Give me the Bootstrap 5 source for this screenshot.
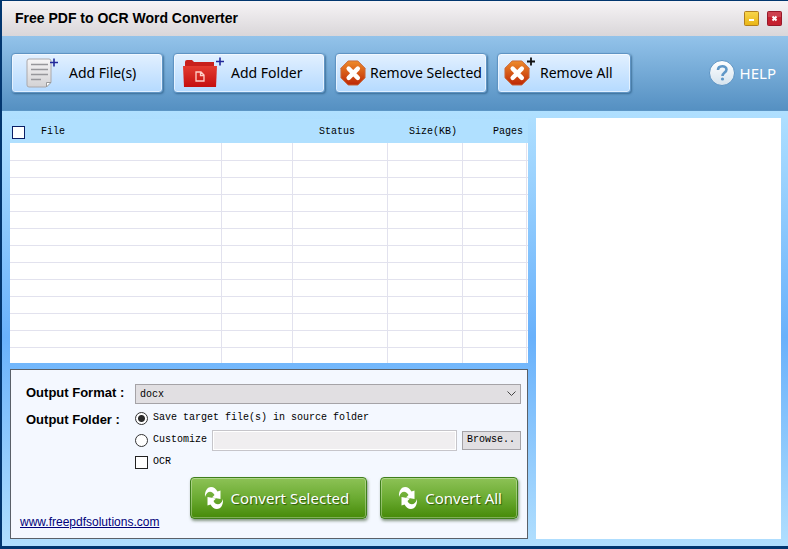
<!DOCTYPE html>
<html lang="en">
<head>
<meta charset="utf-8">
<meta name="viewport" content="width=device-width, initial-scale=1">
<title>Free PDF to OCR Word Converter</title>
<link href="https://cdn.jsdelivr.net/npm/bootstrap@5.3.0/dist/css/bootstrap.min.css" rel="stylesheet">
<style>
  body { font-family: "Liberation Sans", sans-serif; color: #000; background: #b0e0ff; }
  .app-window { border: solid #02366f; border-width: 1px 0 3px 2px; }
  .title-bar { height: 35px; padding: 0 6px 0 13px; background: linear-gradient(#f7f4f6, #d9d6d9); }
  .title-bar h1 { font-size: 14px; font-weight: bold; }
  .win-btn { width: 15px; height: 15px; padding: 0; border: 0; background: none; line-height: 0; }
  .tool-bar { height: 75px; padding: 0 12px 0 9px; gap: 10px; background: linear-gradient(#93c3ea, #5590c2); border-bottom: 1px solid #5c96c6; }
  .tool-btn, .help-link, .convert-btn { font-family: "Noto Sans", sans-serif; font-size: 15px; line-height: 20px; white-space: nowrap; }
  .tool-btn { width: 152px; height: 40px; padding: 0; font-size: 14px; color: #000; border: 1px solid #5f94c4; border-radius: 4px; background: linear-gradient(#e2f0ff, #b5daff); box-shadow: inset 0 0 0 1px #ffffff90, 1px 1px 2px #29587fb0; }
  .tool-btn.compact { width: 134px; }
  .help-link { color: #fff; gap: 5px; }
  .work-area { padding: 7px 7px 7px 8px; gap: 8px; background: linear-gradient(#b0e0ff, #69b1fb 52%, #b1dffe); }
  .files-side { flex: 518 1 0; min-width: 0; }
  .preview { flex: 245 1 0; background: #fff; }
  .mono-text, .file-table { font-family: "Liberation Mono", monospace; font-size: 10px; line-height: 12px; }
  .file-table { table-layout: fixed; width: 100%; margin-top: 1px; }
  .file-table th { height: 24px; padding: 2px 5px 0; font-weight: normal; }
  .file-table th:first-child { padding-left: 2px; }
  .file-table thead { background: #b0e0ff; }
  .file-table tbody { background: #fff; }
  .file-table td { height: 17px; padding: 0; border-right: 1px solid #e2e2ee; border-bottom: 1px solid #e2e2ee; }
  .file-table td:last-child { border-right: 0; box-shadow: inset -1px 0 #fff, inset -2px 0 #e2e2ee; }
  .file-table tr:last-child td { height: 16px; border-bottom: 0; }
  .col-path { width: 70px; } .col-status { width: 95px; } .col-size { width: 75px; } .col-pages { width: 66px; }
  .tick { appearance: none; flex: none; width: 13px; height: 13px; margin: 0; border: 1px solid #222; background: #fff; }
  .tick[type=radio] { border-radius: 50%; border-color: #333; }
  .tick[type=radio]:checked { background: radial-gradient(circle, #2b2b2b 3px, #fff 4px); }
  .tick:checked[type=checkbox] { background: #234; box-shadow: inset 0 0 0 2px #fff; }
  .file-table .tick { border-color: #0b1f66; }
  .output-panel { margin-top: 6px; padding: 14px 6px 9px 9px; border: 1px solid #5a6068; background: #f4f8ff; }
  .options { display: grid; grid-template-columns: 109px 1fr; row-gap: 3px; padding-left: 6px; }
  .options .caption { font-size: 13px; font-weight: bold; line-height: 18px; }
  .format-box { appearance: none; width: 100%; height: 20px; padding: 1px 4px 0; border: 1px solid #a5a3a7; border-radius: 0; color: #000;
    background: #e1dfe2 url("data:image/svg+xml,%3Csvg xmlns='http://www.w3.org/2000/svg' viewBox='0 0 9 6'%3E%3Cpath d='M.5.5l4 4 4-4' fill='none' stroke='%23444'/%3E%3C/svg%3E") no-repeat right 4px center / 9px 6px; }
  .opt-line { gap: 5px; height: 22px; }
  .path-box { height: 21px; min-width: 0; border: 1px solid #c6c5ca; background: #f0eef0; box-shadow: inset 0 0 0 1px #fff; }
  .browse-btn { width: 59px; height: 19px; padding: 0 4px; border: 1px solid #a5a3a7; background: #e1dfe2; color: #000; text-align: left; }
  .site-link { font-size: 12px; line-height: 14px; color: #00007a; }
  .actions { gap: 13px; padding-right: 3px; }
  .convert-btn { height: 42px; margin-bottom: 10px; padding: 0 17px 0 13px; gap: 7px; color: #fff; border: 1px solid #3f7f1c; border-radius: 4px; background: linear-gradient(#8dc256, #6bab32 50%, #468a08); box-shadow: inset 0 0 0 1px #ffffff50, 1px 2px 3px #33502890; text-shadow: 1px 1px 1px #2c5a0a; }
  .convert-btn.wide-lead { padding: 0 15px 0 17px; }
  svg { display: block; flex: none; overflow: visible; }
</style>
<script src="https://cdn.jsdelivr.net/npm/bootstrap@5.3.0/dist/js/bootstrap.bundle.min.js"></script>
</head>
<body>
<svg width="0" height="0" class="position-absolute" aria-hidden="true">
  <defs>
    <linearGradient id="paper" x2="0" y2="1"><stop stop-color="#f6f5f6"/><stop offset="1" stop-color="#d3d2d4"/></linearGradient>
    <linearGradient id="red" x2="0" y2="1"><stop stop-color="#e33b30"/><stop offset="1" stop-color="#c50f0e"/></linearGradient>
    <linearGradient id="orange" x2="0" y2="1"><stop stop-color="#ee8b2b"/><stop offset="1" stop-color="#bd2605"/></linearGradient>
    <linearGradient id="yellow" x2="0" y2="1"><stop stop-color="#f8d64c"/><stop offset="1" stop-color="#e9b414"/></linearGradient>
    <linearGradient id="disc" x2="0" y2="1"><stop stop-color="#fff"/><stop offset="1" stop-color="#d5e3ee"/></linearGradient>
    <symbol id="remove" viewBox="0 0 27 27"><path d="M8.5 1h10L26 8.5v10L18.500 26h-10L1 18.500v-10z" fill="url(#orange)" stroke="#c7683c"/><path d="M9 9l9.500 9.500M18.500 9L9 18.500" stroke="#fff" stroke-width="4.600" stroke-linecap="round"/></symbol>
    <symbol id="cycle" viewBox="0 0 18 22"><g fill="#fff"><path id="cycle-arm" d="M0 10C-.5 3 3 0 6 0C9 0 11 2 12.500 4.500L15.500 3.500V12L7 10.500L9.500 8C7.500 3.500 2 3 0 10z"/><path d="M0 10C-.5 3 3 0 6 0C9 0 11 2 12.500 4.500L15.500 3.500V12L7 10.500L9.500 8C7.500 3.500 2 3 0 10z" transform="rotate(180 9 11)"/></g></symbol>
  </defs>
</svg>
<main class="app-window d-flex flex-column min-vh-100">
  <header class="title-bar d-flex align-items-center">
    <h1 class="m-0 me-auto">Free PDF to OCR Word Converter</h1>
    <div class="d-flex gap-2">
      <button class="win-btn" type="button" aria-label="Minimize"><svg width="15" height="15"><rect x=".5" y=".5" width="14" height="14" rx="1" fill="url(#yellow)" stroke="#b17e1e"/><path d="M5 9h5" stroke="#fff" stroke-width="2"/></svg></button>
      <button class="win-btn" type="button" aria-label="Close"><svg width="15" height="15"><rect x=".5" y=".5" width="14" height="14" rx="1" fill="#c5202f" stroke="#96192a"/><path d="M1 1h13v5H1z" fill="#fff" opacity=".15"/><path d="M5.500 5.500l4 4M9.500 5.500l-4 4" stroke="#fff" stroke-width="2"/></svg></button>
    </div>
  </header>
  <nav class="tool-bar d-flex align-items-center" aria-label="Files">
    <button class="tool-btn d-flex align-items-center" type="button">
      <svg class="ms-3 me-1" width="37" height="36"><path d="M0 5q0-2 2-2h20q2 0 2 2v21l-5 5H2q-2 0-2-2z" transform="translate(-1 1)" fill="url(#paper)" stroke="#aaa8ab"/><path d="M18.500 32v-4.500h4.500z" fill="#fff" stroke="#999"/><path d="M3 9.500h17M3 14.500h17M3 19.500h17M3 24.500h10" stroke="#97979b" stroke-width="1.500"/><path d="M22 7.500h8M26 3.500v8" stroke="#22289a" stroke-width="1.600"/></svg>Add File(s)</button>
    <button class="tool-btn d-flex align-items-center" type="button">
      <svg class="ms-2 me-2" width="41" height="36"><path d="M3 12V7q0-2 2-2h5l2 2h20v5z" fill="#c8201c"/><path d="M1 11h34l-1 21H2z" fill="url(#red)"/><path d="M14 17h5l3 3v6h-8zM18.500 17.500v3H22" fill="none" stroke="#ffd0c8" stroke-width="1.300"/><path d="M34 6.500h8M38 2.500v8" stroke="#22289a" stroke-width="1.600"/></svg>Add Folder</button>
    <button class="tool-btn d-flex align-items-center" type="button"><svg class="ms-1 me-1" width="26" height="26"><use href="#remove"/></svg>Remove Selected</button>
    <button class="tool-btn compact d-flex align-items-center" type="button"><svg class="ms-2 me-2" width="26" height="26"><use href="#remove" x="-2"/><path d="M21 1.500h8M25-2.500v8" stroke="#111" stroke-width="1.800"/></svg>Remove All</button>
    <a class="help-link d-flex align-items-center ms-auto text-decoration-none" href="#"><svg width="26" height="26"><circle cx="13" cy="13" r="12.500" fill="url(#disc)" stroke="#5b93c4"/><path d="M9 10c0-5 8.500-5 8.500-.5 0 3-4 3-4 6.500" fill="none" stroke="#6098c8" stroke-width="2.600"/><circle cx="13.500" cy="19" r="1.600" fill="#6098c8"/></svg>HELP</a>
  </nav>
  <div class="work-area d-flex flex-grow-1">
    <div class="files-side d-flex flex-column">
      <table class="file-table">
        <colgroup><col><col class="col-path"><col class="col-status"><col class="col-size"><col class="col-pages"></colgroup>
        <thead><tr>
          <th scope="col" colspan="2"><span class="d-flex align-items-center gap-3"><input class="tick" type="checkbox" id="all" aria-label="Select all files"><label for="all">File</label></span></th>
          <th scope="col" class="text-center ps-0">Status</th><th scope="col" class="text-end">Size(KB)</th><th scope="col" class="text-end">Pages</th>
        </tr></thead>
        <tbody>
          <tr><td></td><td></td><td></td><td></td><td></td></tr>
          <tr><td></td><td></td><td></td><td></td><td></td></tr>
          <tr><td></td><td></td><td></td><td></td><td></td></tr>
          <tr><td></td><td></td><td></td><td></td><td></td></tr>
          <tr><td></td><td></td><td></td><td></td><td></td></tr>
          <tr><td></td><td></td><td></td><td></td><td></td></tr>
          <tr><td></td><td></td><td></td><td></td><td></td></tr>
          <tr><td></td><td></td><td></td><td></td><td></td></tr>
          <tr><td></td><td></td><td></td><td></td><td></td></tr>
          <tr><td></td><td></td><td></td><td></td><td></td></tr>
          <tr><td></td><td></td><td></td><td></td><td></td></tr>
          <tr><td></td><td></td><td></td><td></td><td></td></tr>
          <tr><td></td><td></td><td></td><td></td><td></td></tr>
        </tbody>
      </table>
      <form class="output-panel d-flex flex-column flex-grow-1">
        <div class="options">
          <label class="caption" for="format">Output Format :</label>
          <select class="format-box mono-text" id="format"><option>docx</option></select>
          <span class="caption pt-1" id="folder-label">Output Folder :</span>
          <div class="mono-text" role="radiogroup" aria-labelledby="folder-label">
            <div class="opt-line d-flex align-items-center"><input class="tick" type="radio" name="folder" id="same" checked><label for="same">Save target file(s) in source folder</label></div>
            <div class="opt-line d-flex align-items-center"><input class="tick" type="radio" name="folder" id="custom"><label for="custom">Customize</label><input class="path-box flex-grow-1" type="text" aria-label="Custom folder"><button class="browse-btn" type="button">Browse..</button></div>
            <div class="opt-line d-flex align-items-center"><input class="tick" type="checkbox" id="ocr"><label for="ocr">OCR</label></div>
          </div>
        </div>
        <div class="actions d-flex mt-auto">
          <a class="site-link me-auto align-self-end" href="#">www.freepdfsolutions.com</a>
          <button class="convert-btn d-flex align-items-center" type="button"><svg width="20" height="22"><use href="#cycle"/></svg>Convert Selected</button>
          <button class="convert-btn wide-lead d-flex align-items-center" type="button"><svg width="20" height="22"><use href="#cycle"/></svg>Convert All</button>
        </div>
      </form>
    </div>
    <section class="preview" aria-label="Preview"></section>
  </div>
</main>
</body>
</html>
